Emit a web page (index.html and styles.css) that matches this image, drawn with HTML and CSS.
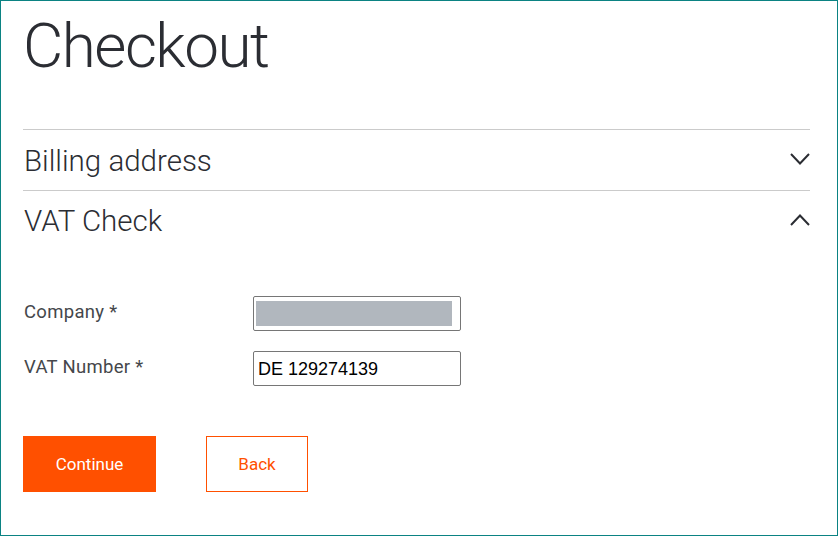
FILE: index.html
```html
<!DOCTYPE html>
<html lang="en">
<head>
<meta charset="utf-8">
<title>Checkout</title>
<link rel="stylesheet" href="styles.css">
</head>
<body>
<div class="frame">
  <h1 class="title">Checkout</h1>
  <div class="accordion">
    <div class="acc-row">
      <span class="acc-label">Billing address</span>
      <svg class="chev" width="20" height="12" viewBox="0 0 20 12"><path d="M1 1 L10 10.5 L19 1" fill="none" stroke="#2b2d33" stroke-width="2"/></svg>
    </div>
    <div class="acc-row open">
      <span class="acc-label">VAT Check</span>
      <svg class="chev" width="20" height="12" viewBox="0 0 20 12"><path d="M1 11 L10 1.5 L19 11" fill="none" stroke="#2b2d33" stroke-width="2"/></svg>
    </div>
  </div>
  <div class="form">
    <div class="field">
      <label class="label">Company *</label>
      <div class="input"><span class="redacted"></span></div>
    </div>
    <div class="field">
      <label class="label">VAT Number *</label>
      <div class="input"><span class="value">DE 129274139</span></div>
    </div>
  </div>
  <div class="actions">
    <button class="btn primary">Continue</button>
    <button class="btn secondary">Back</button>
  </div>
</div>
</body>
</html>
```
FILE: styles.css
```css
* { box-sizing: border-box; }
html, body { margin: 0; padding: 0; background: #fff; }
.frame {
  width: 838px;
  height: 536px;
  border: 1px solid #0b8383;
  padding: 0 27px 0 22px;
  font-family: Roboto, "Liberation Sans", sans-serif;
  color: #2b2d33;
  display: flex;
  flex-direction: column;
}
.title {
  margin: 9px 0 0 0;
  font-size: 62px;
  font-weight: 300;
  line-height: 72px;
  letter-spacing: -1.5px;
  height: 72px;
}
.accordion {
  margin-top: 47px;
}
.acc-row {
  border-top: 1px solid #cbcbcb;
  height: 61px;
  display: flex;
  align-items: flex-start;
  justify-content: space-between;
  padding-top: 13px;
}
.acc-row.open { height: 61px; padding-top: 12px; }
.acc-label {
  font-size: 29.5px;
  line-height: 36px;
  font-weight: 300;
  margin-left: 1px;
}
.chev { margin-top: 10px; }
.acc-row.open .chev { margin-top: 11px; }
.form {
  margin-top: 45px;
  display: flex;
  flex-direction: column;
  gap: 20px;
}
.field {
  display: flex;
  align-items: flex-start;
}
.label {
  width: 230px;
  font-size: 18.5px;
  line-height: 22px;
  font-weight: 400;
  letter-spacing: 0.3px;
  color: #45474b;
  padding-left: 1px;
  padding-top: 5px;
}
.input {
  width: 208px;
  height: 35px;
  border: 1px solid #767676;
  border-radius: 2px;
  padding: 3px 8px 3px 2px;
  display: flex;
  align-items: center;
}
.redacted {
  display: block;
  width: 196px;
  height: 25px;
  background: #b1b7be;
}
.value {
  font-family: "Liberation Sans", Arial, sans-serif;
  font-size: 18px;
  color: #000;
  padding-left: 2px;
  padding-top: 1px;
}
.actions {
  margin-top: 50px;
  display: flex;
  gap: 50px;
}
.btn {
  height: 56px;
  font-family: Roboto, "Liberation Sans", sans-serif;
  font-size: 17px;
  border-radius: 0;
  cursor: pointer;
  padding: 0;
}
.primary {
  width: 133px;
  background: #ff5000;
  color: #fff;
  border: none;
}
.secondary {
  width: 102px;
  background: #fff;
  color: #ff5000;
  border: 1px solid #ff5000;
}
```
